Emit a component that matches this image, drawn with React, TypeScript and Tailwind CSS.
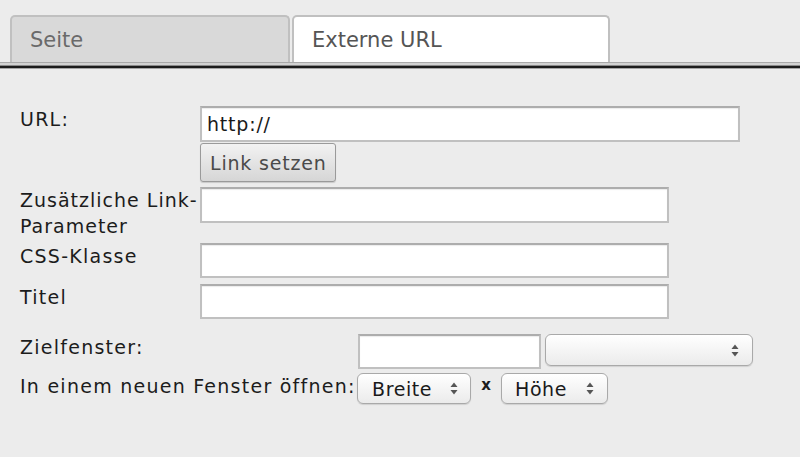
import React from "react";

function Arrows() {
  return (
    <svg width="8" height="13" viewBox="0 0 8 13" className="shrink-0">
      <path d="M4 0.5 L7.5 5 L0.5 5 Z" fill="#555" />
      <path d="M4 12.5 L7.5 8 L0.5 8 Z" fill="#555" />
    </svg>
  );
}

function Select({ label, w, h, pr, pl }: { label?: string; w: string; h: string; pr: string; pl: string }) {
  return (
    <div
      className={`${w} ${h} ${pr} ${pl} flex items-center justify-between rounded-[6px] border border-[#a9a9a9] bg-gradient-to-b from-white to-[#ebebeb] shadow-[0_1px_1px_rgba(0,0,0,0.12)] text-[#1a1a1a] tracking-[0.6px]`}
    >
      <span>{label ?? ""}</span>
      <Arrows />
    </div>
  );
}

function TextInput({ w, h, value }: { w: string; h: string; value?: string }) {
  return (
    <div
      className={`${w} ${h} flex items-center pl-[5px] bg-white border-2 border-[#c0c0c0] border-t-[#adadad] shadow-[inset_0_1px_1px_rgba(0,0,0,0.08)] text-[#1a1a1a] tracking-[0.8px]`}
    >
      {value ?? ""}
    </div>
  );
}

export default function App() {
  return (
    <div className="w-[800px] h-[457px] overflow-hidden bg-[#ececec] font-['DejaVu_Sans',sans-serif]">
      {/* Tabs */}
      <div className="flex items-end gap-[2px] pl-[10px] pt-[15px] h-[62px]">
        <div className="w-[280px] h-[47px] rounded-t-[5px] border-2 border-b-0 border-[#c0c0c0] bg-[#d9d9d9] flex items-center pl-[18px] pt-[3px] text-[21px] text-[#6a6a6a]">
          Seite
        </div>
        <div className="w-[318px] h-[47px] rounded-t-[5px] border-2 border-b-0 border-[#c0c0c0] bg-white flex items-center pl-[18px] pt-[3px] text-[21px] text-[#555]">
          Externe URL
        </div>
      </div>
      {/* separator lines */}
      <div className="h-[1px] bg-[#a9a9a9]" />
      <div className="h-[2px] bg-[#d2d2d2]" />
      <div className="h-[1px] bg-[#8a8a8a]" />
      <div className="h-[2px] bg-[#1c1c1c]" />
      <div className="h-[1px] bg-[#a4a4a4]" />

      {/* Form */}
      <div className="pl-[20px] pt-[37px] text-[19px] leading-[26px] tracking-[1.25px] text-[#1c1c1c]">
        <div className="flex items-start">
          <div className="w-[180px]">URL:</div>
          <div className="flex flex-col items-start">
            <TextInput w="w-[540px]" h="h-[36px]" value="http://" />
            <div className="mt-[1px] w-[136px] h-[39px] flex items-center pl-[9px] rounded-[3px] border border-[#9a9a9a] bg-gradient-to-b from-[#f2f2f2] to-[#d6d6d6] shadow-[0_1px_1px_rgba(0,0,0,0.15)] text-[#4a4a4a] tracking-[0.8px]">
              Link setzen
            </div>
          </div>
        </div>

        <div className="flex items-start mt-[5px]">
          <div className="w-[180px] whitespace-nowrap tracking-[1px]">
            Zusätzliche Link-
            <br />
            Parameter
          </div>
          <TextInput w="w-[469px]" h="h-[36px]" />
        </div>

        <div className="flex items-start mt-[4px]">
          <div className="w-[180px]">CSS-Klasse</div>
          <TextInput w="w-[469px]" h="h-[35px]" />
        </div>

        <div className="flex items-start mt-[6px]">
          <div className="w-[180px]">Titel</div>
          <TextInput w="w-[469px]" h="h-[35px]" />
        </div>

        <div className="flex items-start mt-[15px]">
          <div className="w-[338px]">Zielfenster:</div>
          <TextInput w="w-[183px]" h="h-[35px]" />
          <div className="ml-[4px]">
            <Select w="w-[208px]" h="h-[32px]" pr="pr-[13px]" pl="pl-[14px]" />
          </div>
        </div>

        <div className="flex items-start mt-[4px]">
          <div className="w-[337px] whitespace-nowrap">In einem neuen Fenster öffnen:</div>
          <Select label="Breite" w="w-[114px]" h="h-[31px]" pr="pr-[12px]" pl="pl-[14px]" />
          <div className="w-[30px] flex justify-center text-[15px] font-bold leading-[14px] mt-[5px] tracking-normal">x</div>
          <Select label="Höhe" w="w-[107px]" h="h-[31px]" pr="pr-[13px]" pl="pl-[13px]" />
        </div>
      </div>
    </div>
  );
}
